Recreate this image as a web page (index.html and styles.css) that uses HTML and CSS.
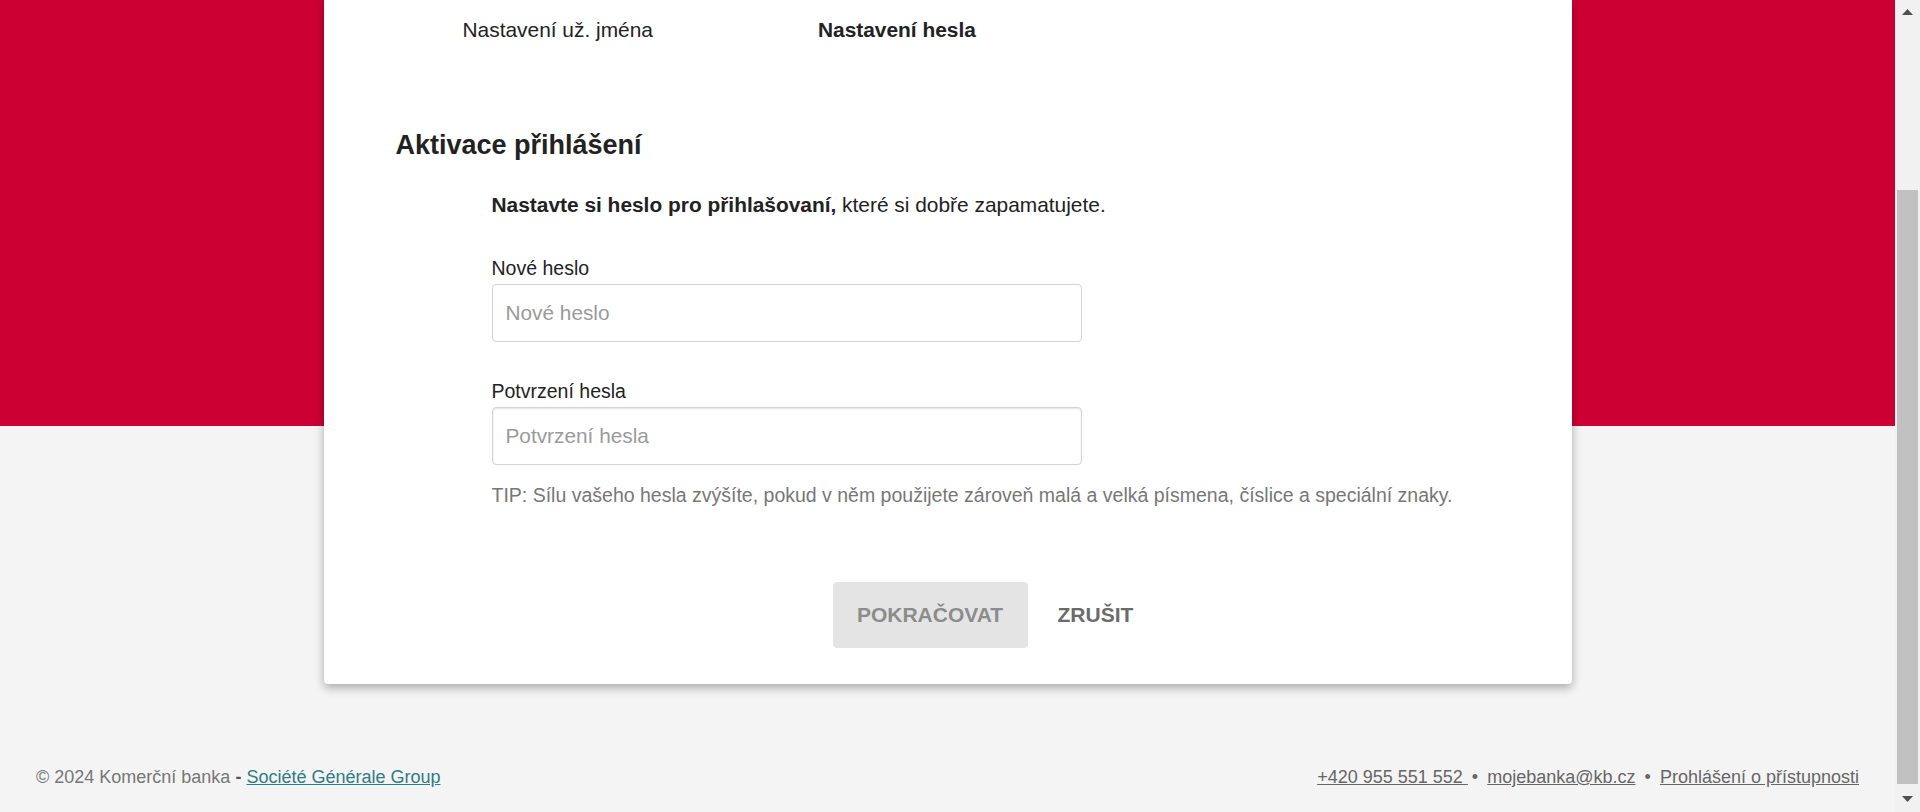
FILE: index.html
```html
<!DOCTYPE html>
<html lang="cs">
<head>
<meta charset="utf-8">
<title>Aktivace přihlášení</title>
<link rel="stylesheet" href="styles.css">
</head>
<body>
<div class="page">
  <div class="main">
    <div class="card">
      <div class="steps">
        <span class="step">Nastavení už. jména</span>
        <span class="step step-active">Nastavení hesla</span>
      </div>
      <h1 class="title">Aktivace přihlášení</h1>
      <div class="form">
        <p class="intro"><strong>Nastavte si heslo pro přihlašovaní,</strong> které si dobře zapamatujete.</p>
        <label class="label" for="pw1">Nové heslo</label>
        <input class="input" id="pw1" type="password" placeholder="Nové heslo">
        <label class="label label-second" for="pw2">Potvrzení hesla</label>
        <input class="input input-shadow" id="pw2" type="password" placeholder="Potvrzení hesla">
        <p class="tip">TIP: Sílu vašeho hesla zvýšíte, pokud v něm použijete zároveň malá a velká písmena, číslice a speciální znaky.</p>
        <div class="actions">
          <button class="btn btn-primary" type="button">POKRAČOVAT</button>
          <button class="btn btn-link" type="button">ZRUŠIT</button>
        </div>
      </div>
    </div>
    <footer class="footer">
      <div class="copy">© 2024 Komerční banka <span class="dash">-</span> <a class="sg" href="#">Société Générale Group</a></div>
      <div class="contacts"><a href="#">+420 955 551 552 </a> <span class="dot">•</span> <a href="#">mojebanka@kb.cz</a> <span class="dot">•</span> <a href="#">Prohlášení o přístupnosti</a></div>
    </footer>
  </div>
  <div class="scrollbar">
    <div class="sb-btn"><svg width="11" height="6" viewBox="0 0 11 6"><polygon points="0,6 5.5,0 11,6" fill="#505050"/></svg></div>
    <div class="sb-track"><div class="sb-thumb"></div></div>
    <div class="sb-btn sb-btn-down"><svg width="11" height="6" viewBox="0 0 11 6"><polygon points="0,0 11,0 5.5,6" fill="#505050"/></svg></div>
  </div>
</div>
</body>
</html>
```
FILE: styles.css
```css
html, body {
  margin: 0;
  padding: 0;
  height: 812px;
  overflow: hidden;
}
body {
  font-family: "Liberation Sans", Arial, sans-serif;
  color: #222;
}
.page {
  display: flex;
  height: 812px;
}
.main {
  flex: 1;
  display: flex;
  flex-direction: column;
  background: linear-gradient(#cc0033 0, #cc0033 426px, #f4f4f4 426px);
}
.card {
  width: 1248px;
  margin: 0 auto;
  background: #fff;
  border-radius: 0 0 4px 4px;
  box-shadow: 0 4px 10px rgba(0, 0, 0, 0.3);
  padding: 16px 0 36px;
  box-sizing: border-box;
}
.steps {
  display: flex;
  padding-left: 139px;
  gap: 165px;
  font-size: 20.9px;
  line-height: 28px;
  color: #222;
}
.step-active {
  font-weight: bold;
}
.title {
  margin: 85px 0 0 72px;
  font-size: 27px;
  line-height: 32px;
  font-weight: bold;
  color: #222;
}
.form {
  margin: 30px 0 0 168px;
  display: flex;
  flex-direction: column;
  align-items: flex-start;
  font-size: 19.5px;
  line-height: 28px;
}
.intro {
  margin: 0;
  font-size: 20.9px;
}
.label {
  margin-top: 35px;
  margin-bottom: 2px;
}
.label-second {
  margin-top: 34.5px;
}
.input {
  width: 590px;
  height: 58px;
  box-sizing: border-box;
  border: 1px solid #d4d4d4;
  border-radius: 4px;
  padding: 0 13px;
  font-family: "Liberation Sans", Arial, sans-serif;
  font-size: 20.8px;
  color: #222;
  background: #fff;
  outline: none;
}
.input-shadow {
  box-shadow: inset 0 1px 2px rgba(0, 0, 0, 0.12);
}
.input::placeholder {
  color: #9a9a9a;
}
.tip {
  margin: 16px 0 0;
  color: #777;
}
.actions {
  display: flex;
  align-items: center;
  margin: 73px 0 0 341px;
  gap: 5px;
}
.btn {
  height: 66px;
  border: none;
  border-radius: 4px;
  padding: 0 25px;
  font-family: "Liberation Sans", Arial, sans-serif;
  font-size: 21px;
  font-weight: bold;
  cursor: pointer;
}
.btn-primary {
  background: #e4e4e4;
  color: #8c8c8c;
  width: 195px;
  padding: 0;
}
.btn-link {
  background: transparent;
  color: #6b6b6b;
}
.footer {
  margin-top: auto;
  display: flex;
  justify-content: space-between;
  padding: 0 36px 23px;
  font-size: 18px;
  line-height: 24px;
  color: #777;
}
.footer a {
  color: #666;
  text-decoration: underline;
}
.footer .sg {
  color: #2e7c84;
}
.dash {
  color: #555;
  font-weight: bold;
}
.dot {
  color: #666;
  padding: 0 4px;
}
.scrollbar {
  width: 25px;
  display: flex;
  flex-direction: column;
  background: #f1f1f1;
}
.sb-btn {
  height: 25px;
  display: flex;
  justify-content: center;
  align-items: flex-start;
  padding-top: 9px;
  box-sizing: border-box;
}
.sb-btn-down {
  align-items: flex-end;
  padding-top: 0;
  padding-bottom: 10px;
}
.sb-track {
  flex: 1;
  padding: 165px 2px 0;
}
.sb-thumb {
  height: 594px;
  background: #c1c1c1;
}
```
